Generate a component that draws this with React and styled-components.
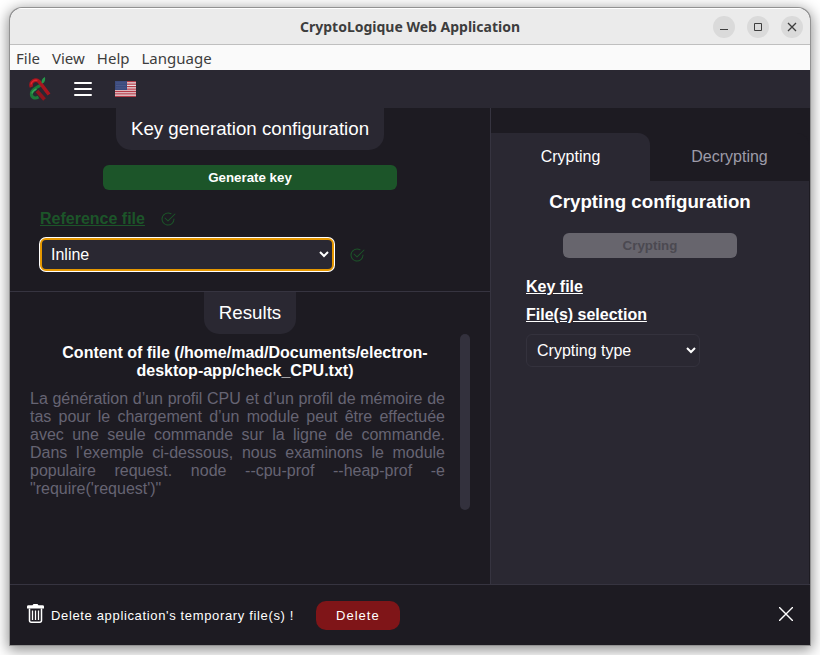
import React from "react";
import styled, { createGlobalStyle, css } from "styled-components";
import { BsCheck2Circle } from "react-icons/bs";

const dark = "#1d1b22";
const panel = "#2a2832";
const line = "#363440";
const green = "#1c5529";

const GlobalStyle = createGlobalStyle`
  *, *::before, *::after { box-sizing: border-box; }
  html, body, #root { height: 100%; }
  body {
    margin: 0;
    background: #fff;
    color: #fff;
    font: 16px/18px "Liberation Sans", Arial, sans-serif;
  }
  button, select { font-family: inherit; }
`;

const Desktop = styled.div`
  height: 100vh;
  padding: 8px 10px 10px;
`;

const AppWindow = styled.div`
  height: 100%;
  display: flex;
  flex-direction: column;
  overflow: hidden;
  background: ${dark};
  border-radius: 12px 12px 0 0;
  box-shadow: 0 0 0 1px #929292, 0 3px 14px 2px rgba(0, 0, 0, 0.45);
`;

const TitleBar = styled.header`
  height: 37px;
  flex: none;
  display: grid;
  grid-template-columns: 1fr auto 1fr;
  align-items: center;
  padding: 1px 7px 0;
  background: #ebebeb;
  border-bottom: 1px solid #bfbfbf;
  box-shadow: inset 0 1px #fff;
`;

const WindowTitle = styled.h1`
  grid-column: 2;
  margin: 0;
  color: #3d3d3d;
  font: 700 14px/20px "Noto Sans", sans-serif;
`;

const WindowButtons = styled.div`
  display: flex;
  justify-content: flex-end;
  gap: 12px;
`;

const WindowButton = styled.button`
  width: 22px;
  height: 22px;
  padding: 0;
  border: 0;
  border-radius: 50%;
  background: #dadada;
  color: #3d3d3d;
  svg { display: block; }
`;

const MenuBar = styled.nav`
  height: 25px;
  flex: none;
  display: flex;
  align-items: center;
  gap: 12px;
  padding: 0 6px;
  background: #fafafa;
`;

const MenuItem = styled.button`
  padding: 0;
  border: 0;
  background: none;
  color: #3d3d3d;
  font: 15px/20px "Noto Sans", sans-serif;
`;

const Toolbar = styled.div`
  height: 38px;
  flex: none;
  display: flex;
  align-items: center;
  gap: 23px;
  padding: 0 18px;
  background: ${panel};
`;

const IconButton = styled.button`
  display: flex;
  padding: 0;
  border: 0;
  background: none;
  color: #fff;
`;

const Workspace = styled.main`
  flex: 1;
  min-height: 0;
  display: grid;
  grid-template-columns: 3fr 2fr;
`;

const LeftColumn = styled.div`
  display: flex;
  flex-direction: column;
`;

const Section = styled.section`
  display: flex;
  flex-direction: column;
  align-items: center;
`;

const KeySection = styled(Section)`
  height: 184px;
  flex: none;
  border-bottom: 1px solid ${line};
`;

const SectionTitle = styled.h3`
  margin: 0;
  padding: 10px 15px;
  border-radius: 0 0 15px 15px;
  background: ${panel};
  font-weight: 400;
  line-height: 22px;
`;

const KeyForm = styled.div`
  width: 100%;
  padding: 15px 30px 0;
`;

const WideButton = styled.button`
  display: block;
  width: 70%;
  height: 25px;
  margin: 0 auto;
  padding: 0;
  border: 0;
  border-radius: 6px;
  background: ${green};
  color: #fff;
  font-weight: 700;
  &:disabled {
    background: #67656d;
    color: #4b4951;
  }
`;

const FieldRow = styled.div`
  display: flex;
  align-items: center;
  gap: 15px;
  margin-top: ${(p) => p.$top}px;
  color: ${green};
`;

const FileLink = styled.a`
  color: ${(p) => (p.$done ? green : "#fff")};
  font-weight: 700;
  text-decoration: underline;
`;

const Select = styled.select`
  width: 70%;
  height: 33px;
  padding: 0 6px;
  border: 1px solid #34323d;
  border-radius: 6px;
  background: ${panel};
  color: #fff;
  font-size: 16px;
  outline: none;
  ${(p) => p.$active && css`
    padding: 0 5px;
    border: 2px solid #e59700;
    box-shadow: 0 0 0 1px #fff;
  `}
`;

const ResultBody = styled.div`
  width: 100%;
  padding: 0 20px;
`;

const ResultScroll = styled.div`
  height: 176px;
  display: flex;
  gap: 15px;
`;

const ResultText = styled.div`
  flex: 1;
`;

const FileTitle = styled.h4`
  margin: 10px 0;
  padding-left: 15px;
  font-size: 16px;
  text-align: center;
`;

const FileContent = styled.p`
  margin: 0;
  color: #666473;
  text-align: justify;
`;

const ScrollTrack = styled.div`
  width: 10px;
  border-radius: 5px;
  background: #33313d;
`;

const RightColumn = styled.aside`
  display: flex;
  flex-direction: column;
  padding-top: 25px;
  padding-right: 1px;
  border-left: 1px solid ${line};
`;

const Tabs = styled.div`
  display: grid;
  grid-template-columns: 1fr 1fr;
`;

const Tab = styled.button`
  height: 48px;
  padding: 0;
  border: 0;
  border-radius: 0 12px 0 0;
  background: ${(p) => (p.$active ? panel : dark)};
  color: ${(p) => (p.$active ? "#fff" : "#9d9ba9")};
  font-size: 16px;
`;

const TabPanel = styled.section`
  flex: 1;
  display: flex;
  flex-direction: column;
  align-items: flex-start;
  padding: 10px 35px;
  background: ${panel};
`;

const PanelTitle = styled.h3`
  align-self: center;
  margin: 0 0 20px;
  line-height: 22px;
`;

const LinkList = styled.div`
  display: flex;
  flex-direction: column;
  align-items: flex-start;
  gap: 10px;
  padding: 20px 0 10px;
`;

const Footer = styled.footer`
  height: 61px;
  flex: none;
  display: flex;
  align-items: center;
  gap: 7px;
  padding: 0 17px;
  border-top: 1px solid ${line};
  font-size: 13px;
  letter-spacing: 0.05em;
  > svg { margin-bottom: 3px; }
`;

const FooterText = styled.span`
  margin-right: 15px;
  padding-top: 1px;
`;

const DeleteButton = styled.button`
  height: 29px;
  padding: 0 20px;
  border: 0;
  border-radius: 10px;
  background: #7f1518;
  color: #fff;
  font-size: 13px;
  letter-spacing: 1px;
`;

const CloseButton = styled(IconButton)`
  margin: 0 0 2px auto;
`;

const Logo = () => (
  <svg width="23" height="24" viewBox="0 0 23 24" fill="none" role="img" aria-label="CryptoLogique">
    <path d="M14.5 7 C10.5 10 4.5 11 3.5 15.5 C2.5 20 6.5 22.5 10.5 20" stroke="#1c7a38" strokeWidth="3" />
    <path d="M9 14 L16.5 22.5" stroke="#8f151d" strokeWidth="3.6" />
    <path d="M3.5 10 C1.5 5 7.5 1 11 4.5 L21 17.5" stroke="#a8151e" strokeWidth="3.6" />
    <path d="M3 7.5 C3.5 4.5 6.5 2.5 9.5 3.5" stroke="#df2630" strokeWidth="1.4" />
    <path d="M4 16.5 C4.5 14 6.5 13 8.5 12" stroke="#35a456" strokeWidth="1.4" />
    <path d="M13.5 5.5 C13.5 3 14.5 1 17 0 C17.5 2.5 17 5.5 14.5 6.5Z" fill="#26974a" />
  </svg>
);

const Flag = () => (
  <svg width="21" height="16" viewBox="0 0 21 16" role="img" aria-label="English">
    <rect width="21" height="16" fill="#e8dfe1" />
    <path d="M0 .7H21M0 3.1H21M0 5.6H21M0 8.1H21M0 10.5H21M0 12.9H21M0 15.3H21" stroke="#b63b48" strokeWidth="1.3" />
    <rect width="12" height="9" fill="#3c4b7e" />
    <path d="M1.5 2H11M1.5 4.5H11M1.5 7H11" stroke="#68749d" strokeWidth=".7" strokeDasharray="1 1" />
  </svg>
);

const Trash = () => (
  <svg width="17" height="19" viewBox="0 0 17 19" fill="none">
    <path d="M5.5 1.2L6.5 0H10.5L11.5 1.2H15.5Q17 1.2 17 2.5V4.5H0V2.5Q0 1.2 1.5 1.2Z" fill="#fff" />
    <path d="M2.5 4.5V16.5Q2.5 18.2 4.3 18.2H12.7Q14.5 18.2 14.5 16.5V4.5" stroke="#fff" strokeWidth="1.5" />
    <path d="M5.5 6.5V16M8.5 6.5V16M11.5 6.5V16" stroke="#fff" strokeWidth="1.3" />
  </svg>
);

export default function App() {
  return (
    <>
      <GlobalStyle />
      <Desktop>
        <AppWindow>
          <TitleBar>
            <WindowTitle>CryptoLogique Web Application</WindowTitle>
            <WindowButtons>
              <WindowButton aria-label="Minimize">
                <svg width="22" height="22"><path d="M7 13.5H15" stroke="currentColor" /></svg>
              </WindowButton>
              <WindowButton aria-label="Maximize">
                <svg width="22" height="22"><path d="M7.5 7.5H14.5V14.5H7.5Z" fill="none" stroke="currentColor" /></svg>
              </WindowButton>
              <WindowButton aria-label="Close window">
                <svg width="22" height="22"><path d="M7 7L15 15M15 7L7 15" stroke="currentColor" strokeWidth="1.3" /></svg>
              </WindowButton>
            </WindowButtons>
          </TitleBar>
          <MenuBar>
            <MenuItem>File</MenuItem>
            <MenuItem>View</MenuItem>
            <MenuItem>Help</MenuItem>
            <MenuItem>Language</MenuItem>
          </MenuBar>
          <Toolbar>
            <Logo />
            <IconButton aria-label="Open menu">
              <svg width="18" height="14" stroke="currentColor" strokeWidth="2" strokeLinecap="round">
                <path d="M1 1H17M1 7H17M1 13H17" />
              </svg>
            </IconButton>
            <IconButton aria-label="Change language"><Flag /></IconButton>
          </Toolbar>
          <Workspace>
            <LeftColumn>
              <KeySection>
                <SectionTitle>Key generation configuration</SectionTitle>
                <KeyForm>
                  <WideButton>Generate key</WideButton>
                  <FieldRow $top={20}>
                    <FileLink href="#reference" $done>Reference file</FileLink>
                    <BsCheck2Circle size={16} />
                  </FieldRow>
                  <FieldRow $top={10}>
                    <Select aria-label="Key output" $active>
                      <option>Inline</option>
                    </Select>
                    <BsCheck2Circle size={16} />
                  </FieldRow>
                </KeyForm>
              </KeySection>
              <Section>
                <SectionTitle>Results</SectionTitle>
                <ResultBody>
                  <ResultScroll>
                    <ResultText>
                      <FileTitle>Content of file (/home/mad/Documents/electron-desktop-app/check_CPU.txt)</FileTitle>
                      <FileContent>
                        La génération d’un profil CPU et d’un profil de mémoire de tas pour le
                        chargement d’un module peut être effectuée avec une seule commande sur la
                        ligne de commande. Dans l’exemple ci-dessous, nous examinons le module
                        populaire request. node --cpu-prof --heap-prof -e "require('request')"
                      </FileContent>
                    </ResultText>
                    <ScrollTrack />
                  </ResultScroll>
                </ResultBody>
              </Section>
            </LeftColumn>
            <RightColumn>
              <Tabs role="tablist">
                <Tab role="tab" aria-selected="true" $active>Crypting</Tab>
                <Tab role="tab" aria-selected="false">Decrypting</Tab>
              </Tabs>
              <TabPanel role="tabpanel">
                <PanelTitle>Crypting configuration</PanelTitle>
                <WideButton disabled>Crypting</WideButton>
                <LinkList>
                  <FileLink href="#key">Key file</FileLink>
                  <FileLink href="#files">File(s) selection</FileLink>
                </LinkList>
                <Select aria-label="Crypting type">
                  <option>Crypting type</option>
                </Select>
              </TabPanel>
            </RightColumn>
          </Workspace>
          <Footer>
            <Trash />
            <FooterText>Delete application's temporary file(s) !</FooterText>
            <DeleteButton>Delete</DeleteButton>
            <CloseButton aria-label="Dismiss">
              <svg width="14" height="14" stroke="currentColor" strokeWidth="1.4">
                <path d="M0 0L14 14M14 0L0 14" />
              </svg>
            </CloseButton>
          </Footer>
        </AppWindow>
      </Desktop>
    </>
  );
}
